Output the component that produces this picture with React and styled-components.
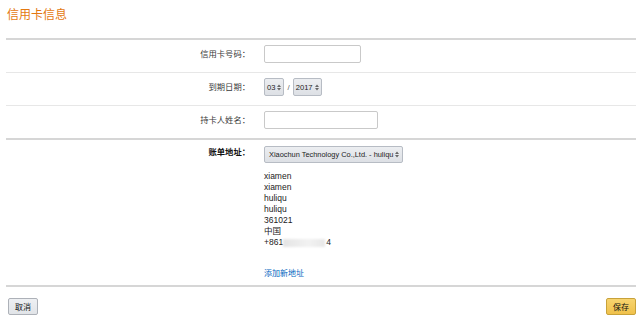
import styled, { createGlobalStyle } from 'styled-components'

const GlobalStyle = createGlobalStyle`
    body {
        margin: 0;
        background: #fff;
        font-family: "Liberation Sans", Arial, "Noto Sans CJK SC", sans-serif;
        color: #333;
    }
`;

function Arrows(){
    return(
        <svg width="4" height="7" viewBox="0 0 4 7">
            <path d="M0 3 L2 0.5 L4 3 Z M0 4 L2 6.5 L4 4 Z" fill="#666" />
        </svg>
    )
}

const address = ['xiamen', 'xiamen', 'huliqu', 'huliqu', '361021', '中国', '+861']

export default function App(){
    return(
        <Page>
            <GlobalStyle />
            <Title>信用卡信息</Title>
            <Section>
                <Row>
                    <Label>信用卡号码：</Label>
                    <Field><Input $width={97} /></Field>
                </Row>
                <Row>
                    <Label>到期日期：</Label>
                    <Field>
                        <Select>03<Arrows /></Select>
                        <Slash>/</Slash>
                        <Select>2017<Arrows /></Select>
                    </Field>
                </Row>
                <Row>
                    <Label>持卡人姓名：</Label>
                    <Field><Input $width={114} /></Field>
                </Row>
            </Section>
            <Section>
                <Row $top>
                    <Label $strong>账单地址：</Label>
                    <Billing>
                        <Select $wide>Xiaochun Technology Co.,Ltd. - huliqu<Arrows /></Select>
                        <Address>
                            {address.map((line, i) => (
                                <Line key={i}>
                                    {line}
                                    {i === address.length - 1 && <><Blur />4</>}
                                </Line>
                            ))}
                        </Address>
                        <Link>添加新地址</Link>
                    </Billing>
                </Row>
            </Section>
            <Section>
                <Buttons>
                    <Button>取消</Button>
                    <Button $primary>保存</Button>
                </Buttons>
            </Section>
        </Page>
    )
}

const Page = styled.div`
    padding: 0 4px 0 6px;
    width: 630px;
`;

const Title = styled.h1`
    margin: 8px 0 16px 1px;
    font-size: 12px;
    line-height: 14px;
    font-weight: normal;
    color: #e47911;
`;

const Section = styled.div`
    border-top: 2px solid #d6d6d6;
`;

const Row = styled.div`
    display: grid;
    grid-template-columns: 244px 1fr;
    column-gap: 14px;
    align-items: ${p => p.$top ? 'start' : 'center'};
    padding: ${p => p.$top ? '6px 0 6px' : '5px 0 9px'};
    border-bottom: 1px solid #e7e7e7;
    &:last-child { border-bottom: none; }
`;

const Label = styled.div`
    text-align: right;
    font-size: 8.3px;
    line-height: ${p => p.$strong ? '13px' : '18px'};
    font-weight: ${p => p.$strong ? 'bold' : 'normal'};
    color: ${p => p.$strong ? '#111' : '#3a3a3a'};
`;

const Field = styled.div`
    display: flex;
    align-items: center;
    height: 18px;
`;

const Billing = styled.div`
    display: flex;
    flex-direction: column;
    align-items: flex-start;
`;

const Input = styled.div`
    width: ${p => p.$width}px;
    height: 18px;
    box-sizing: border-box;
    border: 1px solid #c9c9c9;
    border-radius: 2px;
    background: #fff;
`;

const Select = styled.div`
    display: flex;
    align-items: center;
    gap: 2px;
    height: ${p => p.$wide ? '17px' : '18px'};
    box-sizing: border-box;
    padding: ${p => p.$wide ? '0 3px 0 4px' : '0 2px 0 2px'};
    border: 1px solid #b7bcc4;
    border-radius: 2px;
    background: linear-gradient(#eceef1, #dde0e5);
    font-size: ${p => p.$wide ? '7.4px' : '7.6px'};
    color: #222;
    white-space: nowrap;
`;

const Slash = styled.span`
    margin: 0 3px;
    font-size: 8px;
    color: #666;
`;

const Address = styled.div`
    margin-top: 8px;
    font-size: 8.5px;
    color: #222;
`;

const Line = styled.div`
    display: flex;
    align-items: center;
    height: 11px;
    line-height: 11px;
`;

const Blur = styled.span`
    display: inline-block;
    width: 42px;
    height: 8px;
    margin-right: 1px;
    background: linear-gradient(90deg, #e4e4e4, #f2f2f2 60%, #e8e8e8);
    filter: blur(1px);
`;

const Link = styled.div`
    margin-top: 20px;
    height: 11px;
    font-size: 8px;
    line-height: 11px;
    color: #0066c0;
`;

const Buttons = styled.div`
    display: flex;
    justify-content: space-between;
    padding: 11px 0 0 2px;
`;

const Button = styled.button`
    height: 17px;
    padding: 0 6px;
    border: 1px solid ${p => p.$primary ? '#c8a23a' : '#adb1b8'};
    border-radius: 2px;
    background: ${p => p.$primary
        ? 'linear-gradient(#f7d46f, #f0c14b)'
        : 'linear-gradient(#eef0f3, #e1e4e8)'};
    font-family: "Liberation Sans", Arial, "Noto Sans CJK SC", sans-serif;
    font-size: 8px;
    color: #111;
`;
